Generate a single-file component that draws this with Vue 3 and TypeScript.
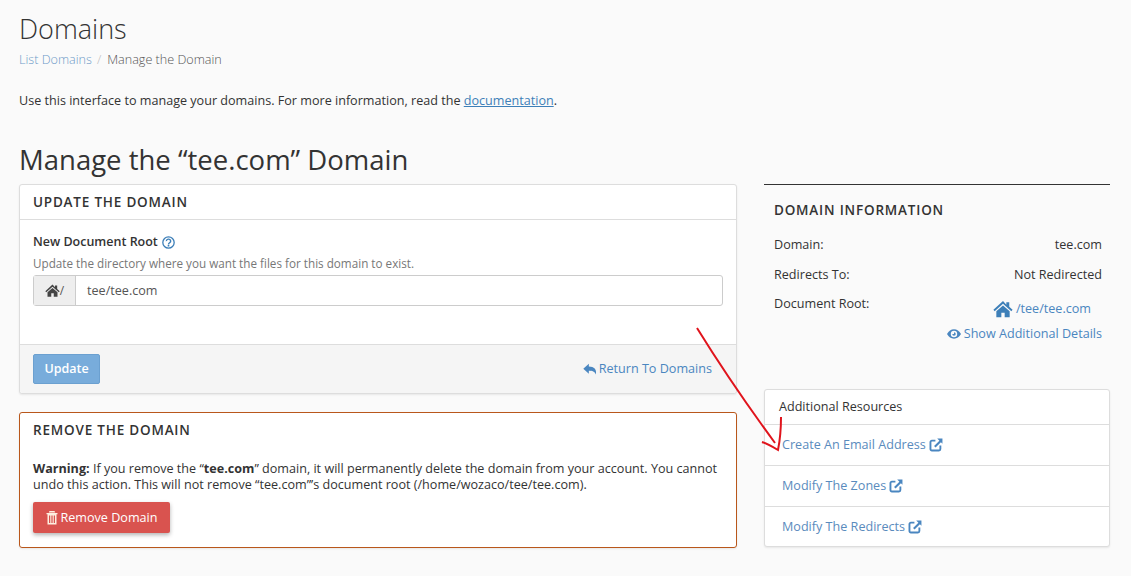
<script setup lang="ts">
const details = [
  { label: 'Domain:', value: 'tee.com' },
  { label: 'Redirects To:', value: 'Not Redirected' },
]
const resources = ['Create An Email Address', 'Modify The Zones', 'Modify The Redirects']
const homePath = 'M12 2.500.5 13l1.500 1.700L12 5.800l10 8.900 1.500-1.700-4-3.600V4h-3.500v2.800zM12 7.800l-8 7V22h6v-5.500h4V22h6v-7.200z'
</script>

<template>
  <div class="page">
    <h1 class="page-title">Domains</h1>
    <nav class="crumbs">
      <a class="crumb-link">List Domains</a>
      <span class="crumb-sep">/</span>
      <span class="crumb-current">Manage the Domain</span>
    </nav>
    <p class="intro">
      Use this interface to manage your domains. For more information, read the
      <a class="doc-link">documentation</a>.
    </p>
    <h2 class="manage-title">Manage the “tee.com” Domain</h2>

    <div class="columns">
      <div class="left">
        <section class="card">
          <h3 class="card-head bordered">UPDATE THE DOMAIN</h3>
          <div class="card-body">
            <div class="field-label">
              New Document Root
              <svg class="help" viewBox="0 0 24 24">
                <circle cx="12" cy="12" r="10.500" fill="none" stroke="currentColor" stroke-width="2.400" />
                <path d="M8 9.500a4 3.600 0 1 1 6 3c-1.300.9-2 1.400-2 3" fill="none" stroke="currentColor" stroke-width="2.600" />
                <rect x="10.500" y="16.600" width="3" height="2.800" fill="currentColor" />
              </svg>
            </div>
            <div class="field-help">Update the directory where you want the files for this domain to exist.</div>
            <div class="input-group">
              <span class="addon">
                <svg class="addon-home" viewBox="0 0 24 24"><path :d="homePath" /></svg><span>/</span>
              </span>
              <span class="input-value">tee/tee.com</span>
            </div>
          </div>
          <div class="card-foot">
            <button class="btn-update">Update</button>
            <a class="return-link">
              <svg class="return-icon" viewBox="0 0 24 24"><path d="M10 3 .5 11.500 10 20v-5c6 0 10 1 12 6.500 2-9-3-13.500-12-13.700z" /></svg>
              Return To Domains
            </a>
          </div>
        </section>

        <section class="card danger">
          <h3 class="card-head">REMOVE THE DOMAIN</h3>
          <div class="danger-body">
            <p class="warning">
              <strong>Warning:</strong> If you remove the “<strong>tee.com</strong>” domain, it will permanently delete the domain from your account. You cannot undo this action. This will not remove “tee.com”’s document root (/home/wozaco/tee/tee.com).
            </p>
            <button class="btn-remove">
              <svg class="trash" viewBox="0 0 24 28">
                <path fill-rule="evenodd" d="M1 5h22v2.500h-2V28H3V7.500H1zM7 1h10l1.500 3h-13zM6 10v15h2.500V10zm4.750 0v15h2.500V10zm4.750 0v15H18V10z" />
              </svg>
              Remove Domain
            </button>
          </div>
        </section>
      </div>

      <aside class="right">
        <div class="info">
          <h3 class="info-head">DOMAIN INFORMATION</h3>
          <div v-for="d in details" :key="d.label" class="info-row">
            <span>{{ d.label }}</span><span>{{ d.value }}</span>
          </div>
          <div class="root-row">
            <span>Document Root:</span>
            <div class="root-links">
              <a class="root-path">
                <svg class="root-home" viewBox="0 0 24 24"><path :d="homePath" /></svg>
                /tee/tee.com
              </a>
              <a class="details-link">
                <svg class="eye" viewBox="0 0 24 16">
                  <path fill-rule="evenodd" d="M0 8C3 3 7 0 12 0s9 3 12 8c-3 5-7 8-12 8S3 13 0 8zm12-5.500a5.500 5.500 0 1 0 0 11 5.500 5.500 0 0 0 0-11zM12 5a3 3 0 1 1-3 3h3z" />
                </svg>
                Show Additional Details
              </a>
            </div>
          </div>
        </div>

        <div class="resources">
          <div class="res-head">Additional Resources</div>
          <a v-for="r in resources" :key="r" class="res-row">
            {{ r }}
            <svg class="ext" viewBox="0 0 24 24">
              <path d="M11 4.500H5A2.500 2.500 0 0 0 2.500 7v12A2.500 2.500 0 0 0 5 21.500h12a2.500 2.500 0 0 0 2.500-2.500v-6" fill="none" stroke="currentColor" stroke-width="3.200" />
              <path d="M10 15 20 5" fill="none" stroke="currentColor" stroke-width="3.600" />
              <path d="M14 1h9v9z" fill="currentColor" />
            </svg>
          </a>
        </div>
      </aside>
    </div>

    <!-- red arrow drawn on top of the screenshot -->
    <svg class="annotation" width="1131" height="576" viewBox="0 0 1131 576">
      <path d="M697 328C718 362 742 398 775 443" />
      <path d="M781 417C781 430 780 440 778 450C773 447 768 444 762 442" />
    </svg>
  </div>
</template>

<style scoped>
.page {
  position: relative;
  height: 576px;
  overflow: hidden;
  padding: 0 21px 0 19px;
  box-sizing: border-box;
  background: #fafafa;
  color: #333;
  font-family: "Open Sans", sans-serif;
  font-size: 12.600px;
}
.page-title {
  margin: 0;
  padding-top: 9px;
  font-size: 27px;
  line-height: 40px;
  font-weight: 300;
}
.crumbs {
  margin-top: 2px;
  line-height: 18px;
  font-weight: 300;
}
.crumb-link {
  color: #6f9bc8;
}
.crumb-sep {
  margin: 0 6px 0 5px;
  color: #bbb;
}
.crumb-current {
  color: #555;
}
.intro {
  margin: 23px 0 0;
  line-height: 18px;
}
.doc-link {
  color: #3d7fb8;
  text-decoration: underline;
}
.manage-title {
  margin: 32px 0 0;
  font-size: 27.500px;
  line-height: 36px;
  font-weight: 500;
}
.columns {
  display: flex;
  justify-content: space-between;
  margin-top: 6px;
}
.left {
  width: 718px;
}
.right {
  width: 346px;
}
.card {
  background: #fff;
  border: 1px solid #ddd;
  border-radius: 3px;
  box-shadow: 0 1px 2px rgba(0, 0, 0, 0.08);
}
.card-head {
  margin: 0;
  padding: 0 13px;
  height: 34px;
  line-height: 34px;
  font-size: 13.500px;
  font-weight: 600;
  letter-spacing: 0.8px;
}
.bordered {
  border-bottom: 1px solid #ddd;
}
.card-body {
  height: 124px;
  padding: 13px 13px 0;
  box-sizing: border-box;
}
.field-label {
  display: flex;
  align-items: center;
  gap: 4px;
  line-height: 18px;
  font-weight: 600;
  font-size: 12.500px;
}
.help {
  width: 13px;
  height: 13px;
  color: #3d7fb8;
}
.field-help {
  margin-top: 3px;
  line-height: 18px;
  font-size: 11.700px;
  color: #777;
}
.input-group {
  display: flex;
  height: 31px;
  margin-top: 3px;
  border: 1px solid #ccc;
  border-radius: 3px;
  box-sizing: border-box;
}
.addon {
  display: flex;
  align-items: center;
  justify-content: center;
  width: 41px;
  background: #eee;
  border-right: 1px solid #ccc;
  color: #555;
  font-size: 12px;
}
.addon-home {
  width: 15px;
  height: 15px;
  fill: #444;
}
.input-value {
  padding-left: 11px;
  line-height: 29px;
  color: #555;
}
.card-foot {
  display: flex;
  align-items: center;
  justify-content: space-between;
  height: 47px;
  padding: 0 24px 1px 13px;
  background: #f5f5f5;
  border-top: 1px solid #ddd;
  border-radius: 0 0 3px 3px;
}
.btn-update {
  width: 67px;
  height: 30px;
  padding: 0;
  background: #78acdb;
  border: 1px solid #6ba0d0;
  border-radius: 2px;
  color: #fff;
  font-family: inherit;
  font-size: 12.500px;
  font-weight: 600;
}
.return-link {
  display: flex;
  align-items: center;
  gap: 2px;
  color: #4a86c0;
}
.return-icon {
  width: 14px;
  height: 14px;
  fill: #4a86c0;
}
.danger {
  margin-top: 18px;
  border-color: #b9571b;
}
.danger-body {
  padding: 14px 13px 14px;
}
.warning {
  margin: 0;
  line-height: 16px;
}
.warning strong {
  font-weight: 700;
}
.btn-remove {
  display: flex;
  align-items: center;
  justify-content: center;
  gap: 3px;
  width: 137px;
  height: 31px;
  margin-top: 9px;
  padding: 0;
  background: #d9534f;
  border: none;
  border-radius: 2px;
  box-shadow: 0 2px 4px rgba(0, 0, 0, 0.3);
  color: #fff;
  font-family: inherit;
  font-size: 12.600px;
}
.trash {
  width: 12px;
  height: 15px;
  fill: #fdeee0;
}
.info {
  height: 205px;
  padding: 0 8px 0 10px;
  border-top: 1px solid #333;
  box-sizing: border-box;
}
.info-head {
  margin: 16px 0 0;
  line-height: 18px;
  font-size: 13.500px;
  font-weight: 600;
  letter-spacing: 0.8px;
}
.info-row {
  display: flex;
  justify-content: space-between;
  margin-top: 12px;
  line-height: 18px;
}
.info-head + .info-row {
  margin-top: 17px;
}
.root-row {
  display: flex;
  justify-content: space-between;
  margin-top: 11px;
  line-height: 18px;
}
.root-links {
  display: flex;
  flex-direction: column;
  align-items: flex-end;
}
.root-path {
  display: flex;
  align-items: center;
  gap: 3px;
  margin: 4px 11px 0 0;
  color: #4a86c0;
}
.root-home {
  width: 20px;
  height: 20px;
  fill: #3d7fb8;
}
.details-link {
  display: flex;
  align-items: center;
  gap: 3px;
  margin-top: 6px;
  color: #4a86c0;
}
.eye {
  width: 14px;
  height: 10px;
  fill: #4a86c0;
}
.resources {
  background: #fff;
  border: 1px solid #ddd;
  border-radius: 3px;
  box-shadow: 0 1px 2px rgba(0, 0, 0, 0.08);
}
.res-head {
  height: 34px;
  padding-left: 14px;
  line-height: 33px;
}
.res-row {
  display: flex;
  align-items: center;
  gap: 3px;
  height: 41px;
  padding: 0 0 1px 17px;
  border-top: 1px solid #ddd;
  box-sizing: border-box;
  color: #5a8bbd;
}
.res-row:last-child {
  height: 40px;
  padding-bottom: 0;
}
.ext {
  width: 14px;
  height: 14px;
  color: #4a86c0;
}
.annotation {
  position: absolute;
  top: 0;
  left: 0;
  pointer-events: none;
}
.annotation path {
  fill: none;
  stroke: #e0141c;
  stroke-width: 2;
}
</style>

<style>
html,
body {
  margin: 0;
  background: #fafafa;
}
</style>
